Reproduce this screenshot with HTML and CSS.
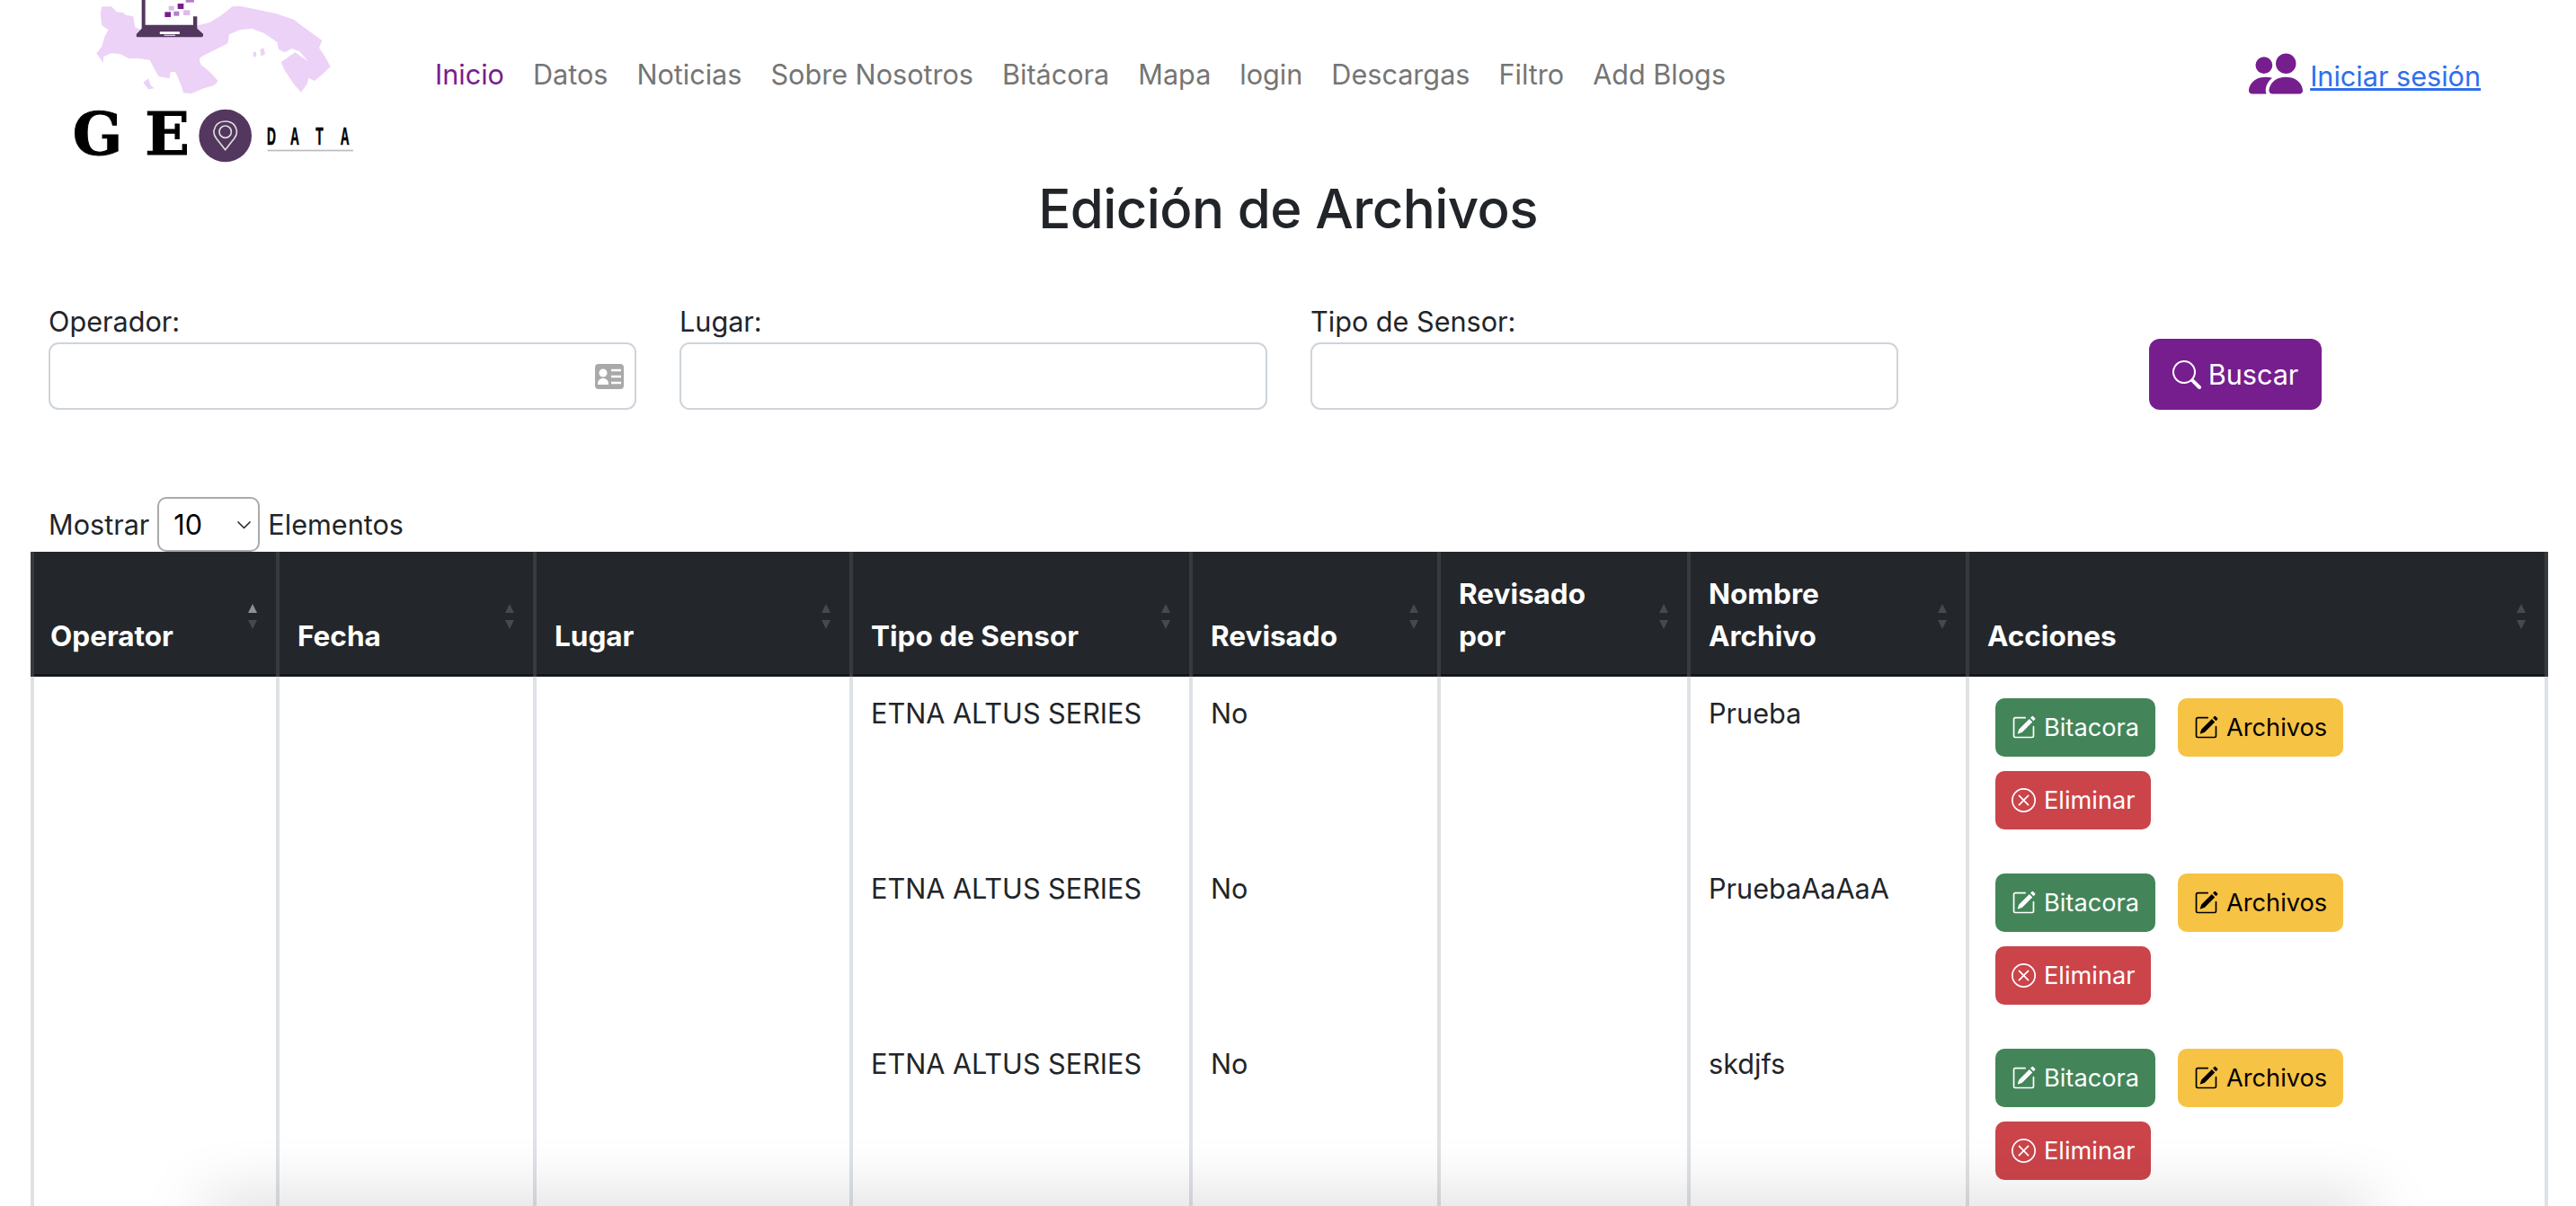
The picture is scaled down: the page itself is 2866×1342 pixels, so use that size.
FILE: index.html
```html
<!DOCTYPE html>
<html lang="es">
<head>
  <meta charset="UTF-8">
  <meta name="viewport" content="width=device-width, initial-scale=1.0">
  <title>Edición de Archivos</title>
  <link rel="stylesheet" href="styles.css">
</head>
<body>
  <header class="navbar">
    <a class="brand" href="#">
      <svg class="brand-logo" viewBox="240 0 960 591" role="img" aria-label="Geo Data">
        <path class="map" d="M340 22 L372 22 L390 40 L410 42 L420 50 L445 55 L450 90 L470 100 L660 85 L700 75 L740 50 L775 22 L800 20 L860 32 L920 45 L980 65 L1020 95 L1075 135 L1065 160 L1085 190 L1103 222 L1085 240 L1050 270 L1030 260 L1025 280 L1005 308 L980 280 L950 235 L938 208 L965 188 L985 175 L1028 205 L1000 172 L975 162 L950 175 L930 165 L925 140 L880 110 L840 95 L800 100 L765 115 L760 145 L720 165 L680 185 L665 195 L670 215 L700 240 L728 270 L715 285 L680 295 L640 312 L612 310 L605 285 L585 240 L570 240 L565 262 L530 255 L515 230 L500 200 L460 195 L430 195 L400 180 L370 178 L345 190 L345 210 L322 178 L340 155 L350 120 L362 100 L340 85 L335 45 Z"/>
        <path class="map" d="M478 275 L495 262 L503 285 L515 295 L495 298 Z"/>
        <path class="map" d="M868 165 L880 160 L885 180 L872 188 Z"/>
        <path class="map" d="M845 175 L855 172 L855 190 L845 190 Z"/>
        <rect class="screen" x="480" y="0" width="170" height="88"/>
        <path class="dark" d="M473 0 H485 V83 H645 V55 H658 V95 L678 113 Q680 124 670 124 H462 Q452 124 456 113 L473 95 Z"/>
        <rect class="screen" x="533" y="106" width="67" height="8" rx="3"/>
        <rect class="notch" x="548" y="116" width="37" height="4"/>
        <rect class="sq-dark" x="550" y="40" width="20" height="17"/>
        <rect class="sq-dark" x="593" y="12" width="20" height="18"/>
        <rect class="sq-mid" x="580" y="38" width="18" height="15"/>
        <rect class="sq-light" x="563" y="20" width="18" height="15"/>
        <rect class="sq-light" x="612" y="34" width="22" height="17"/>
        <rect class="sq-mid" x="620" y="0" width="28" height="8"/>
        <text class="logo-geo" y="516"><tspan x="242">G</tspan><tspan x="484">E</tspan></text>
        <circle class="dark" cx="752" cy="453" r="88"/>
        <path class="pin" d="M752 500 L722 462 Q712 448 714 436 Q720 405 752 405 Q784 405 790 436 Q792 448 782 462 Z"/>
        <circle class="pin" cx="752" cy="440" r="20"/>
        <text class="logo-data" transform="scale(0.5 1)" y="482"><tspan x="1782">D</tspan><tspan x="1938">A</tspan><tspan x="2108">T</tspan><tspan x="2272">A</tspan></text>
        <rect class="logo-rule" x="893" y="500" width="286" height="5"/>
      </svg>
    </a>
    <nav class="nav-links">
      <a class="active" href="#">Inicio</a>
      <a href="#">Datos</a>
      <a href="#">Noticias</a>
      <a href="#">Sobre Nosotros</a>
      <a href="#">Bitácora</a>
      <a href="#">Mapa</a>
      <a href="#">login</a>
      <a href="#">Descargas</a>
      <a href="#">Filtro</a>
      <a href="#">Add Blogs</a>
    </nav>
    <div class="user-login">
      <svg class="user-icon" viewBox="0 0 16 16" fill="currentColor"><path d="M7 14s-1 0-1-1 1-4 5-4 5 3 5 4-1 1-1 1H7Zm4-6a3 3 0 1 0 0-6 3 3 0 0 0 0 6Zm-5.784 6A2.238 2.238 0 0 1 5 13c0-1.355.68-2.75 1.936-3.72A6.325 6.325 0 0 0 5 9c-4 0-5 3-5 4s1 1 1 1h4.216ZM4.5 8a2.5 2.5 0 1 0 0-5 2.5 2.5 0 0 0 0 5Z"/></svg>
      <a href="#">Iniciar sesión</a>
    </div>
  </header>

  <h1 class="page-title">Edición de Archivos</h1>

  <form class="filters">
    <div class="field">
      <label for="operador">Operador:</label>
      <div class="input-wrap">
        <input id="operador" type="text">
        <svg class="card-icon" viewBox="0 0 32 28"><rect width="32" height="28" rx="4" fill="#a9a9a9"/><circle cx="9" cy="10" r="4.5" fill="#fff"/><path d="M3 23c0-5 2.500-7 6-7s6 2 6 7z" fill="#fff"/><path d="M18 7h11M18 14h11M18 21h11" stroke="#fff" stroke-width="2.500"/></svg>
      </div>
    </div>
    <div class="field">
      <label for="lugar">Lugar:</label>
      <input id="lugar" type="text">
    </div>
    <div class="field">
      <label for="sensor">Tipo de Sensor:</label>
      <input id="sensor" type="text">
    </div>
    <div class="field field-action">
      <button class="btn-search" type="button">
        <svg class="icon" viewBox="0 0 16 16" fill="currentColor"><path d="M11.742 10.344a6.5 6.5 0 1 0-1.397 1.398h-.001c.03.04.062.078.098.115l3.85 3.85a1 1 0 0 0 1.415-1.414l-3.85-3.85a1.007 1.007 0 0 0-.115-.1zM12 6.500a5.500 5.500 0 1 1-11 0 5.500 5.500 0 0 1 11 0z"/></svg>
        Buscar
      </button>
    </div>
  </form>

  <div class="table-length">
    <span>Mostrar</span>
    <span class="select-wrap">
      <select><option>10</option><option>25</option><option>50</option></select>
      <svg class="chevron" viewBox="0 0 16 10" fill="none" stroke="currentColor" stroke-width="1.500"><path d="M1 1.500 8 8.500 15 1.500"/></svg>
    </span>
    <span>Elementos</span>
  </div>

  <table class="data-table">
    <colgroup>
      <col class="c1"><col class="c2"><col class="c3"><col class="c4"><col class="c5"><col class="c6"><col class="c7"><col class="c8">
    </colgroup>
    <thead>
      <tr>
        <th class="sorted">Operator</th>
        <th>Fecha</th>
        <th>Lugar</th>
        <th>Tipo de Sensor</th>
        <th>Revisado</th>
        <th>Revisado por</th>
        <th>Nombre Archivo</th>
        <th>Acciones</th>
      </tr>
    </thead>
    <tbody>
      <tr>
        <td></td><td></td><td></td>
        <td>ETNA ALTUS SERIES</td>
        <td>No</td>
        <td></td>
        <td>Prueba</td>
        <td class="actions">
          <div class="action-list">
            <a class="btn btn-green" href="#"><svg class="icon" viewBox="0 0 16 16" fill="currentColor"><use href="#pencil"/></svg> Bitacora</a>
            <a class="btn btn-yellow" href="#"><svg class="icon" viewBox="0 0 16 16" fill="currentColor"><use href="#pencil"/></svg> Archivos</a>
            <a class="btn btn-red" href="#"><svg class="icon" viewBox="0 0 16 16" fill="currentColor"><use href="#xcircle"/></svg> Eliminar</a>
          </div>
        </td>
      </tr>
      <tr>
        <td></td><td></td><td></td>
        <td>ETNA ALTUS SERIES</td>
        <td>No</td>
        <td></td>
        <td>PruebaAaAaA</td>
        <td class="actions">
          <div class="action-list">
            <a class="btn btn-green" href="#"><svg class="icon" viewBox="0 0 16 16" fill="currentColor"><use href="#pencil"/></svg> Bitacora</a>
            <a class="btn btn-yellow" href="#"><svg class="icon" viewBox="0 0 16 16" fill="currentColor"><use href="#pencil"/></svg> Archivos</a>
            <a class="btn btn-red" href="#"><svg class="icon" viewBox="0 0 16 16" fill="currentColor"><use href="#xcircle"/></svg> Eliminar</a>
          </div>
        </td>
      </tr>
      <tr>
        <td></td><td></td><td></td>
        <td>ETNA ALTUS SERIES</td>
        <td>No</td>
        <td></td>
        <td>skdjfs</td>
        <td class="actions">
          <div class="action-list">
            <a class="btn btn-green" href="#"><svg class="icon" viewBox="0 0 16 16" fill="currentColor"><use href="#pencil"/></svg> Bitacora</a>
            <a class="btn btn-yellow" href="#"><svg class="icon" viewBox="0 0 16 16" fill="currentColor"><use href="#pencil"/></svg> Archivos</a>
            <a class="btn btn-red" href="#"><svg class="icon" viewBox="0 0 16 16" fill="currentColor"><use href="#xcircle"/></svg> Eliminar</a>
          </div>
        </td>
      </tr>
      <tr>
        <td></td><td></td><td></td><td></td><td></td><td></td><td></td><td></td>
      </tr>
    </tbody>
  </table>

  <div class="bottom-shadow"></div>

  <svg class="icon-defs" aria-hidden="true">
    <symbol id="pencil" viewBox="0 0 16 16">
      <path d="M15.502 1.940a.5.5 0 0 1 0 .706L14.459 3.690l-2-2L13.502.646a.5.5 0 0 1 .707 0l1.293 1.293zm-1.750 2.456-2-2L4.939 9.210a.5.5 0 0 0-.121.196l-.805 2.414a.25.25 0 0 0 .316.316l2.414-.805a.5.5 0 0 0 .196-.12l6.813-6.814z"/>
      <path fill-rule="evenodd" d="M1 13.500A1.500 1.500 0 0 0 2.500 15h11a1.500 1.500 0 0 0 1.500-1.500v-6a.5.5 0 0 0-1 0v6a.5.5 0 0 1-.5.5h-11a.5.5 0 0 1-.5-.5v-11a.5.5 0 0 1 .5-.5H9a.5.5 0 0 0 0-1H2.500A1.500 1.500 0 0 0 1 2.500v11z"/>
    </symbol>
    <symbol id="xcircle" viewBox="0 0 16 16">
      <path d="M8 15A7 7 0 1 1 8 1a7 7 0 0 1 0 14zm0 1A8 8 0 1 0 8 0a8 8 0 0 0 0 16z"/>
      <path d="M4.646 4.646a.5.5 0 0 1 .708 0L8 7.293l2.646-2.647a.5.5 0 0 1 .708.708L8.707 8l2.647 2.646a.5.5 0 0 1-.708.708L8 8.707l-2.646 2.647a.5.5 0 0 1-.708-.708L7.293 8 4.646 5.354a.5.5 0 0 1 0-.708z"/>
    </symbol>
  </svg>
</body>
</html>
```

FILE: styles.css
```css
html, body {
  height: 100%;
  margin: 0;
  overflow: hidden;
}

body {
  position: relative;
  font-family: Inter, "Liberation Sans", sans-serif;
  font-size: 30.6px;
  line-height: 47px;
  color: #212529;
  background-color: #fff;
}

/* navbar */
.navbar {
  display: flex;
  align-items: flex-start;
  height: 197px;
  padding: 0 106px 0 80px;
}

.brand-logo {
  display: block;
  width: 320px;
  height: 197px;
}

.map { fill: #ecd2f6; }
.screen { fill: #fff; }
.dark { fill: #53375f; }
.notch { fill: #cfcfcf; }
.sq-dark { fill: #771e8f; }
.sq-mid { fill: #b57fcb; }
.sq-light { fill: #ddbdea; }
.pin { fill: none; stroke: #ddd; stroke-width: 5; }
.logo-geo { font-family: "DejaVu Serif", serif; font-weight: 700; font-size: 195px; fill: #000; stroke: #000; stroke-width: 3; }
.logo-data { font-family: "Liberation Sans", sans-serif; font-weight: 700; font-size: 82px; fill: #000; stroke: #000; stroke-width: 2; }
.logo-rule { fill: #bbb; }

.nav-links {
  display: flex;
  gap: 32px;
  margin-left: 84px;
  padding-top: 59px;
}

.nav-links a {
  color: #757575;
  text-decoration: none;
}

.nav-links a.active { color: #771e8f; }

.user-login {
  display: flex;
  align-items: center;
  gap: 8px;
  margin-left: auto;
  padding-top: 60px;
}

.user-login a {
  margin-top: -3px;
  color: #2f6fed;
}

.user-icon {
  width: 60px;
  height: 60px;
  color: #771e8f;
  margin-top: -8px;
}

/* title */
.page-title {
  margin: 0;
  font-size: 60px;
  font-weight: 500;
  letter-spacing: -0.6px;
  line-height: 70px;
  text-align: center;
}

/* filter form */
.filters {
  display: grid;
  grid-template-columns: repeat(4, 654px);
  column-gap: 48px;
  margin-top: 67px;
  padding-left: 54px;
}

.field label { display: block; }

.field input {
  display: block;
  width: 100%;
  height: 75px;
  box-sizing: border-box;
  border: 2px solid #ced4da;
  border-radius: 11px;
  font: inherit;
}

.input-wrap { position: relative; }

.card-icon {
  position: absolute;
  top: 24px;
  right: 14px;
  width: 32px;
  height: 28px;
}

.field-action {
  display: flex;
  justify-content: center;
  align-items: flex-end;
}

.btn-search {
  display: flex;
  align-items: center;
  justify-content: center;
  gap: 8px;
  width: 192px;
  height: 79px;
  border: none;
  border-radius: 12px;
  background-color: #771e8f;
  color: #fff;
  font: inherit;
}

.btn-search .icon {
  width: 32px;
  height: 32px;
}

/* length selector */
.table-length {
  display: flex;
  align-items: center;
  gap: 9px;
  height: 61px;
  margin-top: 97px;
  padding-left: 54px;
}

.select-wrap { position: relative; display: block; }

.select-wrap select {
  display: block;
  width: 114px;
  height: 61px;
  box-sizing: border-box;
  padding: 0 0 0 16px;
  border: 2px solid #aaa;
  border-radius: 10px;
  background-color: #fff;
  color: #000;
  font: inherit;
  appearance: none;
}

.chevron {
  position: absolute;
  top: 26px;
  right: 9px;
  width: 17px;
  height: 10px;
  color: #222;
}

/* table */
.data-table {
  width: 2797px;
  margin-left: 34px;
  border-collapse: collapse;
  table-layout: fixed;
}

.c1 { width: 273px; }
.c2 { width: 286px; }
.c3 { width: 352px; }
.c4 { width: 378px; }
.c5 { width: 276px; }
.c6 { width: 278px; }
.c7 { width: 310px; }
.c8 { width: 644px; }

.data-table th {
  position: relative;
  height: 139px;
  box-sizing: border-box;
  padding: 0 70px 22px 20px;
  border-top: 0;
  border-bottom: 0;
  border-left: 4px solid #373b3e;
  border-right: 4px solid #373b3e;
  background-color: #23272b;
  box-shadow: inset 0 -3px #15171a;
  color: #fff;
  font-size: 31.5px;
  font-weight: 700;
  line-height: 47px;
  text-align: left;
  vertical-align: bottom;
}

.data-table th:first-child { padding-left: 18px; }

.data-table th::before,
.data-table th::after {
  content: "";
  position: absolute;
  right: 21px;
  border-left: 5px solid transparent;
  border-right: 5px solid transparent;
}

.data-table th::before {
  top: 58px;
  border-bottom: 10px solid #464a4d;
}

.data-table th::after {
  top: 76px;
  border-top: 10px solid #464a4d;
}

.data-table th.sorted::before { border-bottom-color: #8e9092; }

.data-table td {
  height: 195px;
  box-sizing: border-box;
  padding: 17px 20px 0;
  border-left: 4px solid #dee2e6;
  border-right: 4px solid #dee2e6;
  vertical-align: top;
}

.data-table td.actions { padding: 24px 0 0 29px; }

.action-list {
  display: flex;
  flex-wrap: wrap;
  gap: 16px 25px;
  width: 420px;
}

.btn {
  display: inline-flex;
  align-items: center;
  gap: 9px;
  height: 65px;
  padding: 0 18px;
  border-radius: 10px;
  font-size: 27.2px;
  text-decoration: none;
}

.btn .icon {
  width: 27px;
  height: 27px;
}

.btn-green { background-color: #438559; color: #fff; }
.btn-yellow { background-color: #f6c344; color: #000; }
.btn-red { background-color: #cb444a; color: #fff; }

/* shadow of something just below the window */
.bottom-shadow {
  position: absolute;
  left: 230px;
  right: 230px;
  bottom: -30px;
  height: 30px;
  box-shadow: 0 0 70px rgba(0, 0, 0, 0.25);
}

.icon-defs {
  position: absolute;
  width: 0;
  height: 0;
}
```
